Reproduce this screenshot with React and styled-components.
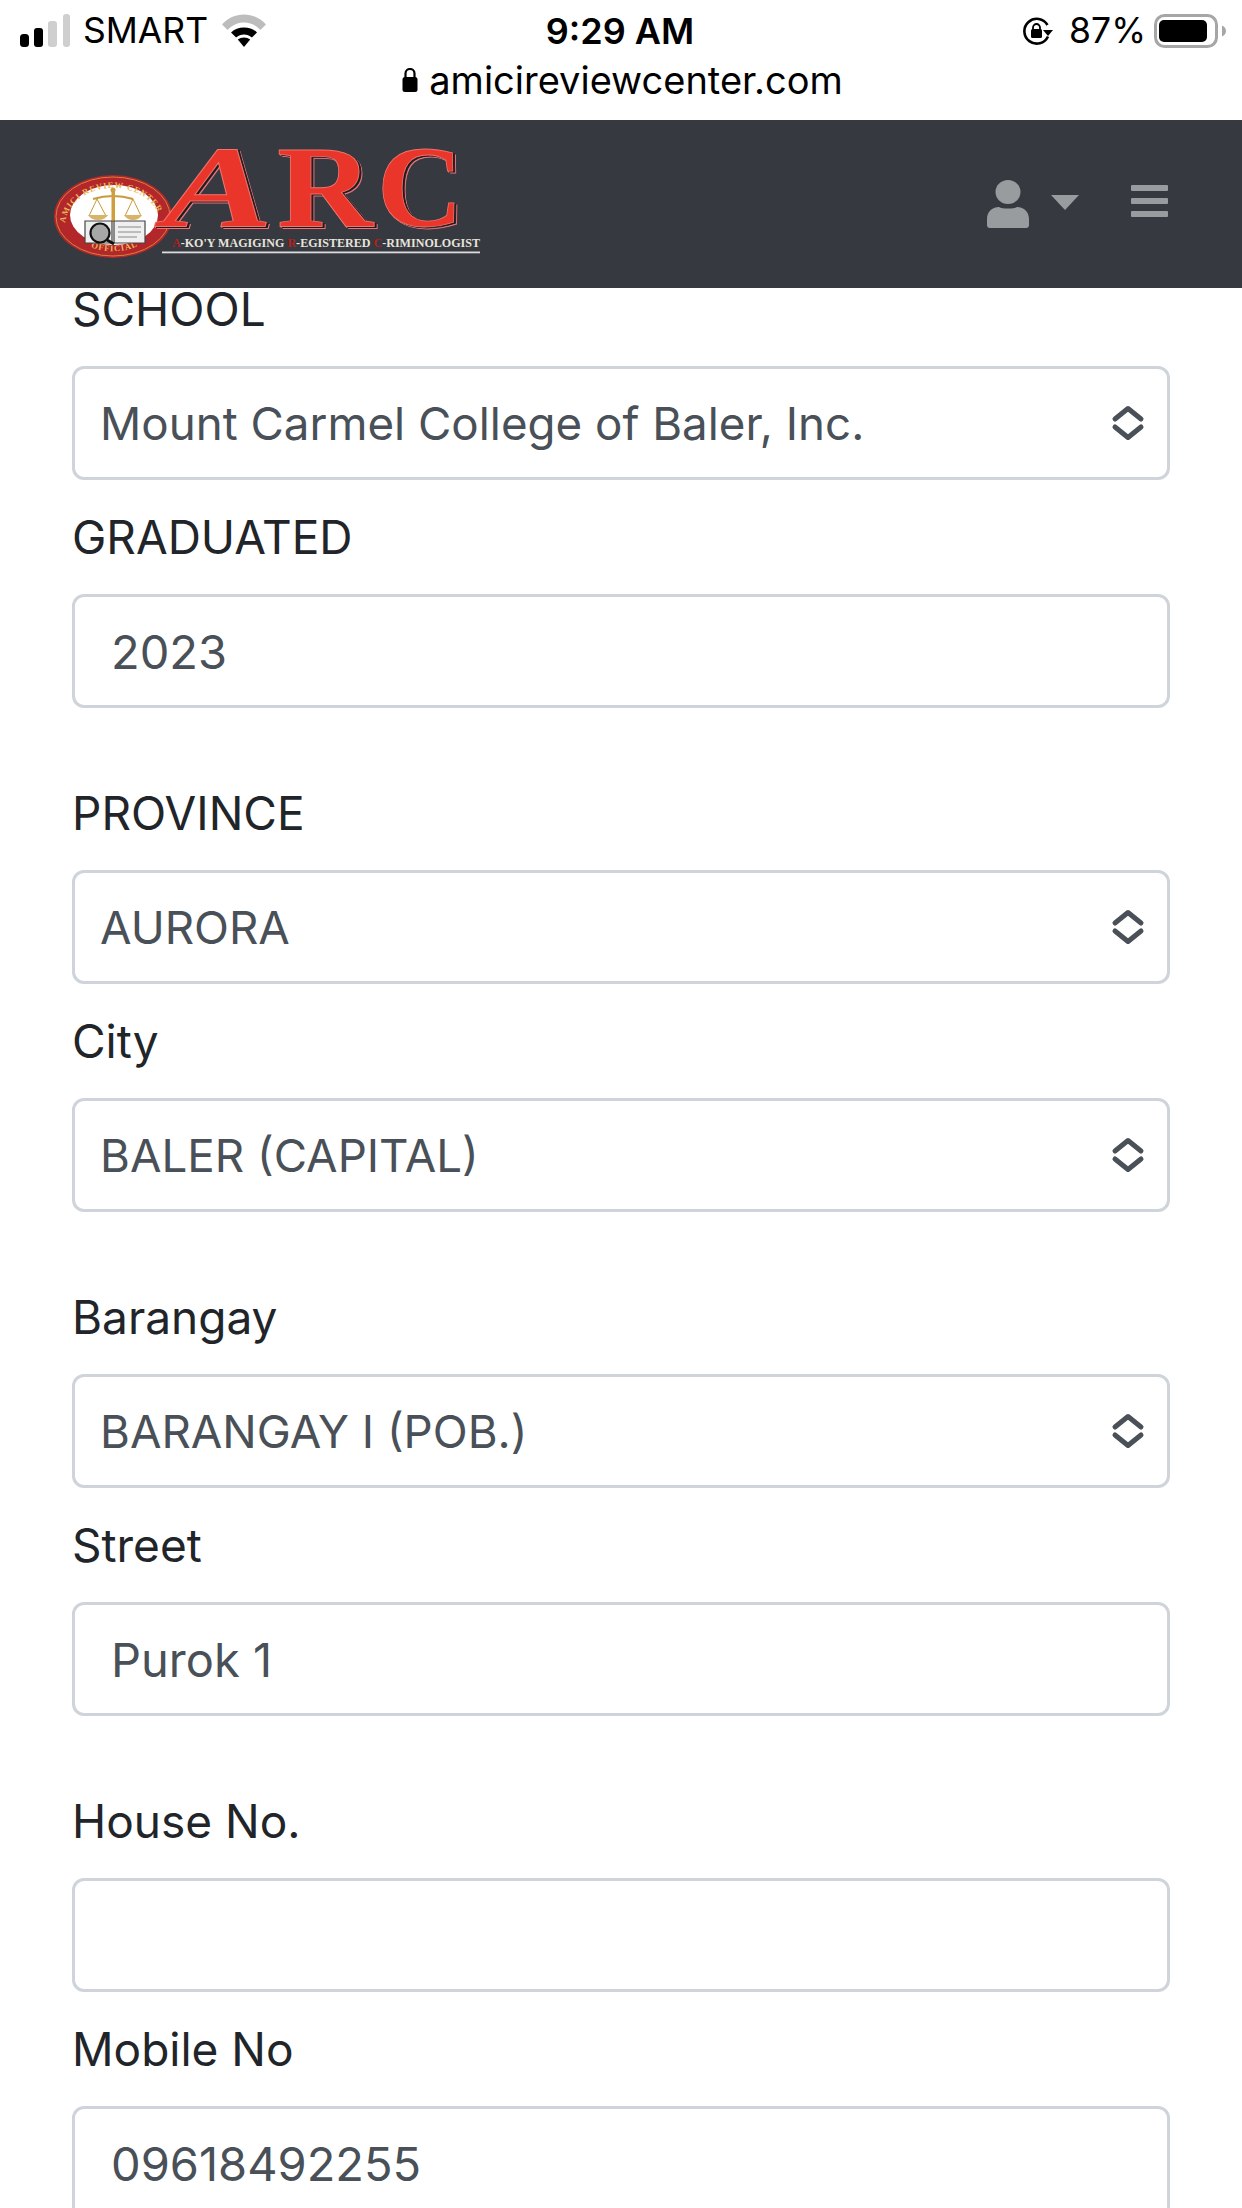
import React from "react";
import styled, { createGlobalStyle } from "styled-components";

const Global = createGlobalStyle`
  html, body { margin: 0; padding: 0; background: #fff; }
  body { font-family: Inter, "Liberation Sans", sans-serif; }
  * { box-sizing: border-box; }
`;

const Page = styled.div`
  width: 1242px;
  height: 2208px;
  overflow: hidden;
  background: #fff;
`;

const StatusArea = styled.header`
  height: 120px;
  background: #fff;
  color: #000;
  padding: 13px 0 0;
  display: flex;
  flex-direction: column;
`;

const StatusBar = styled.div`
  height: 36px;
  display: grid;
  grid-template-columns: 1fr auto 1fr;
  align-items: center;
  padding: 0 16px 0 20px;
`;

const StatusLeft = styled.div`
  display: flex;
  align-items: center;
`;

const StatusRight = styled.div`
  display: flex;
  align-items: center;
  justify-content: flex-end;
`;

const Carrier = styled.span`
  font-size: 35.5px;
  line-height: 36px;
  margin: 0 14px 0 13px;
`;

const Clock = styled.span`
  font-size: 36px;
  line-height: 36px;
  font-weight: 600;
  margin-right: 6px;
`;

const Percent = styled.span`
  font-size: 35.5px;
  line-height: 36px;
  margin: 0 8px 0 16px;
`;

const AddressLine = styled.div`
  margin-top: 12px;
  height: 38px;
  display: flex;
  justify-content: center;
  align-items: center;
  gap: 11px;
  padding-left: 3px;
  font-size: 38px;
  line-height: 38px;
`;

const Navbar = styled.nav`
  position: relative;
  z-index: 1;
  height: 168px;
  background: #363940;
  display: flex;
  align-items: center;
  justify-content: space-between;
  padding: 0 74px 0 50px;
`;

const NavActions = styled.div`
  display: flex;
  align-items: center;
`;

const Caret = styled.span`
  width: 0;
  height: 0;
  margin: 0 52px 4px 22px;
  border-left: 14px solid transparent;
  border-right: 14px solid transparent;
  border-top: 15px solid #999c9f;
`;

const MenuGlyph = styled.svg`
  display: block;
  margin-bottom: 6px;
`;

const Form = styled.form`
  margin-top: -36px;
  padding: 0 72px;
  display: flex;
  flex-direction: column;
  gap: 48px;
`;

const Section = styled.section`
  display: flex;
  flex-direction: column;
`;

const Label = styled.label`
  display: block;
  margin: 21px 0;
  height: 72px;
  font-size: 46px;
  line-height: 72px;
  color: #212529;
`;

const Field = styled.div`
  position: relative;
  height: 114px;
`;

const fieldBase = `
  display: block;
  width: 100%;
  height: 114px;
  background: #fff;
  border: 3px solid #ced4da;
  border-radius: 12px;
  color: #495057;
  font-family: Inter, "Liberation Sans", sans-serif;
  outline: none;
  margin: 0;
`;

const Select = styled.select`
  ${fieldBase}
  font-size: 45.7px;
  appearance: none;
  -webkit-appearance: none;
  padding: 0 70px 0 25px;
`;

const Input = styled.input`
  ${fieldBase}
  font-size: 47px;
  padding: 0 36px;
`;

const Chevrons = styled.svg`
  position: absolute;
  right: 25px;
  top: 38px;
  width: 34px;
  height: 38px;
  pointer-events: none;
`;

const LogoLetter = styled.text`
  font-family: "Liberation Serif", serif;
  font-weight: 700;
  font-size: 116px;
  font-style: ${(p) => (p.$slant ? "italic" : "normal")};
  fill: #e9352a;
  stroke: #f0726a;
  stroke-width: 0.8px;
  filter: drop-shadow(2px 1px 0 #1c1c20) drop-shadow(1.5px 1.5px 0 #e8747a);
`;

const Tagline = styled.text`
  font-family: "Liberation Serif", serif;
  font-weight: 700;
  font-size: 11.5px;
  fill: #e8e4dc;
`;

const TaglineInitial = styled.tspan`
  fill: #b3201c;
`;

const RingText = styled.text`
  font-family: "Liberation Serif", serif;
  font-weight: 700;
  font-size: 8.5px;
  letter-spacing: 0.9px;
  fill: #e8b858;
`;

const SignalIcon = () => (
  <svg width="50" height="34" viewBox="0 0 50 34">
    <rect x="0" y="20" width="9" height="13" rx="3.500" fill="#000" />
    <rect x="14" y="14" width="9" height="19" rx="3" fill="#000" />
    <rect x="28" y="7" width="9" height="26" rx="3" fill="#cfcfcf" />
    <rect x="43" y="0" width="7" height="33" rx="3" fill="#cfcfcf" />
  </svg>
);

const WifiIcon = () => (
  <svg width="44" height="34" viewBox="0 0 39 34" preserveAspectRatio="none">
    <path d="M0 10.500C5 4 12 0.500 19.500 0.500S34 4 39 10.500L34 16C30 11 25 8.500 19.500 8.500S9 11 5 16Z" fill="#bdbdbd" />
    <path d="M8 18.500C11 15 15 13.500 19.500 13.500S28 15 31 18.500L26.500 23.500C24.500 21.500 22 20.500 19.500 20.500S14.500 21.500 12.500 23.500Z" fill="#000" />
    <path d="M14 25.500C15.500 24.200 17.500 23.500 19.500 23.500S23.500 24.200 25 25.500L19.500 33Z" fill="#000" />
  </svg>
);

const RotationLockIcon = () => (
  <svg width="31" height="28" viewBox="0 0 31 28">
    <path d="M26 19.500A12.400 12.400 0 1 1 25.500 8" fill="none" stroke="#000" strokeWidth="2.600" />
    <path d="M21 13H31L26 19Z" fill="#000" />
    <rect x="9" y="12" width="11" height="9" rx="1.500" fill="#000" />
    <path d="M11 12.500V10.500A3.500 3.500 0 0 1 18 10.500V12.500" fill="none" stroke="#000" strokeWidth="1.800" />
  </svg>
);

const BatteryIcon = () => (
  <svg width="72" height="34" viewBox="0 0 72 34">
    <rect x="1.500" y="1.500" width="61" height="31" rx="9" fill="none" stroke="#a6a6a6" strokeWidth="3" />
    <rect x="5" y="6" width="48" height="22" rx="5" fill="#000" />
    <path d="M68 11.500C70.500 12.500 72 14.500 72 17S70.500 21.500 68 22.500Z" fill="#a6a6a6" />
  </svg>
);

const LockGlyph = () => (
  <svg width="16" height="24" viewBox="0 0 16 24">
    <rect x="0.500" y="9" width="15" height="15" rx="2.500" fill="#000" />
    <path d="M3.500 10V5.500A4.500 4.500 0 0 1 12.500 5.500V10" fill="none" stroke="#000" strokeWidth="2.200" />
  </svg>
);

const UserIcon = () => (
  <svg width="42" height="48" viewBox="0 0 42 48">
    <ellipse cx="21" cy="12" rx="12.500" ry="12" fill="#999c9f" />
    <path d="M0 45V39C0 31 6 27 12 27C15 29 27 29 30 27C36 27 42 31 42 39V45A3 3 0 0 1 39 48H3A3 3 0 0 1 0 45Z" fill="#999c9f" />
  </svg>
);

const MenuIcon = () => (
  <MenuGlyph width="37" height="32" viewBox="0 0 37 32">
    <rect y="0" width="37" height="6" rx="1" fill="#999c9f" />
    <rect y="13" width="37" height="6" rx="1" fill="#999c9f" />
    <rect y="26" width="37" height="6" rx="1" fill="#999c9f" />
  </MenuGlyph>
);

const ChevronsGlyph = () => (
  <Chevrons viewBox="0 0 34 38">
    <path d="M4 15L17 4.500L30 15M4 23L17 33.500L30 23" fill="none" stroke="#495057" strokeWidth="5" strokeLinecap="round" strokeLinejoin="round" />
  </Chevrons>
);

const LETTERS = [
  { ch: "A", x: 163, w: 110, slant: true },
  { ch: "R", x: 277, w: 96, slant: false },
  { ch: "C", x: 377, w: 86, slant: false },
];

const Logo = () => (
  <svg width="440" height="168" viewBox="50 120 440 168">
    <defs>
      <path id="ringTop" d="M65 226A48 38 0 0 1 161 226" />
      <path id="ringBottom" d="M84 243C98 254 128 254 142 243" />
    </defs>
    <ellipse cx="113" cy="216.500" rx="59" ry="41.500" fill="#b3262a" />
    <ellipse cx="113" cy="216.500" rx="57" ry="39.500" fill="none" stroke="#d2813f" strokeWidth="1" />
    <ellipse cx="114" cy="215" rx="44" ry="30" fill="#fff" />
    <RingText>
      <textPath href="#ringTop" startOffset="3">AMICI REVIEW CENTER</textPath>
    </RingText>
    <RingText>
      <textPath href="#ringBottom" startOffset="8">OFFICIAL</textPath>
    </RingText>
    <g fill="none" stroke="#c99a3c">
      <path d="M93 199Q113 193 133 199" strokeWidth="2.200" />
      <path d="M89 216L97 199L106 216M125 216L133 199L141 216" strokeWidth="1" />
    </g>
    <path d="M88 215H108Q105 220 98 220T88 215ZM124 215H142Q139 220 133 220T124 215Z" fill="#d8b468" />
    <rect x="111.500" y="190" width="3.500" height="32" fill="#d09f3c" />
    <circle cx="113" cy="190" r="2.500" fill="#d09f3c" />
    <path d="M85 221H112V243H85ZM114 221H145V243H114Z" fill="#efefef" stroke="#444" strokeWidth="1.200" />
    <path d="M118 227H141M118 232H141M118 237H137" stroke="#888" strokeWidth="1" />
    <circle cx="100" cy="233" r="9.500" fill="#a7a7a7" stroke="#111" strokeWidth="2.200" />
    <path d="M107 240L114 244" stroke="#111" strokeWidth="3" />
    {LETTERS.map((l) => (
      <LogoLetter
        key={l.ch}
        x={l.x}
        y={226}
        textLength={l.w}
        lengthAdjust="spacingAndGlyphs"
        $slant={l.slant}
      >
        {l.ch}
      </LogoLetter>
    ))}
    <Tagline x="172" y="247" textLength="308" lengthAdjust="spacingAndGlyphs">
      <TaglineInitial>A</TaglineInitial>-KO'Y MAGIGING <TaglineInitial>R</TaglineInitial>-EGISTERED <TaglineInitial>C</TaglineInitial>-RIMINOLOGIST
    </Tagline>
    <rect x="162" y="251.500" width="318" height="1.800" fill="#dcdcdc" />
  </svg>
);

const Dropdown = ({ id, value }) => (
  <Field>
    <Select id={id} defaultValue={value}>
      <option value={value}>{value}</option>
    </Select>
    <ChevronsGlyph />
  </Field>
);

const TextBox = ({ id, value }) => (
  <Field>
    <Input id={id} defaultValue={value} />
  </Field>
);

const SECTIONS = [
  [
    { id: "school", label: "SCHOOL", kind: "select", value: "Mount Carmel College of Baler, Inc." },
    { id: "graduated", label: "GRADUATED", kind: "input", value: "2023" },
  ],
  [
    { id: "province", label: "PROVINCE", kind: "select", value: "AURORA" },
    { id: "city", label: "City", kind: "select", value: "BALER (CAPITAL)" },
  ],
  [
    { id: "barangay", label: "Barangay", kind: "select", value: "BARANGAY I (POB.)" },
    { id: "street", label: "Street", kind: "input", value: "Purok 1" },
  ],
  [
    { id: "house", label: "House No.", kind: "input", value: "" },
    { id: "mobile", label: "Mobile No", kind: "input", value: "09618492255" },
  ],
];

export default function App() {
  return (
    <Page>
      <Global />
      <StatusArea>
        <StatusBar>
          <StatusLeft>
            <SignalIcon />
            <Carrier>SMART</Carrier>
            <WifiIcon />
          </StatusLeft>
          <Clock>9:29 AM</Clock>
          <StatusRight>
            <RotationLockIcon />
            <Percent>87%</Percent>
            <BatteryIcon />
          </StatusRight>
        </StatusBar>
        <AddressLine>
          <LockGlyph />
          <span>amicireviewcenter.com</span>
        </AddressLine>
      </StatusArea>
      <Navbar>
        <Logo />
        <NavActions>
          <UserIcon />
          <Caret />
          <MenuIcon />
        </NavActions>
      </Navbar>
      <Form>
        {SECTIONS.map((fields) => (
          <Section key={fields[0].id}>
            {fields.map((f) => (
              <React.Fragment key={f.id}>
                <Label htmlFor={f.id}>{f.label}</Label>
                {f.kind === "select" ? (
                  <Dropdown id={f.id} value={f.value} />
                ) : (
                  <TextBox id={f.id} value={f.value} />
                )}
              </React.Fragment>
            ))}
          </Section>
        ))}
      </Form>
    </Page>
  );
}
